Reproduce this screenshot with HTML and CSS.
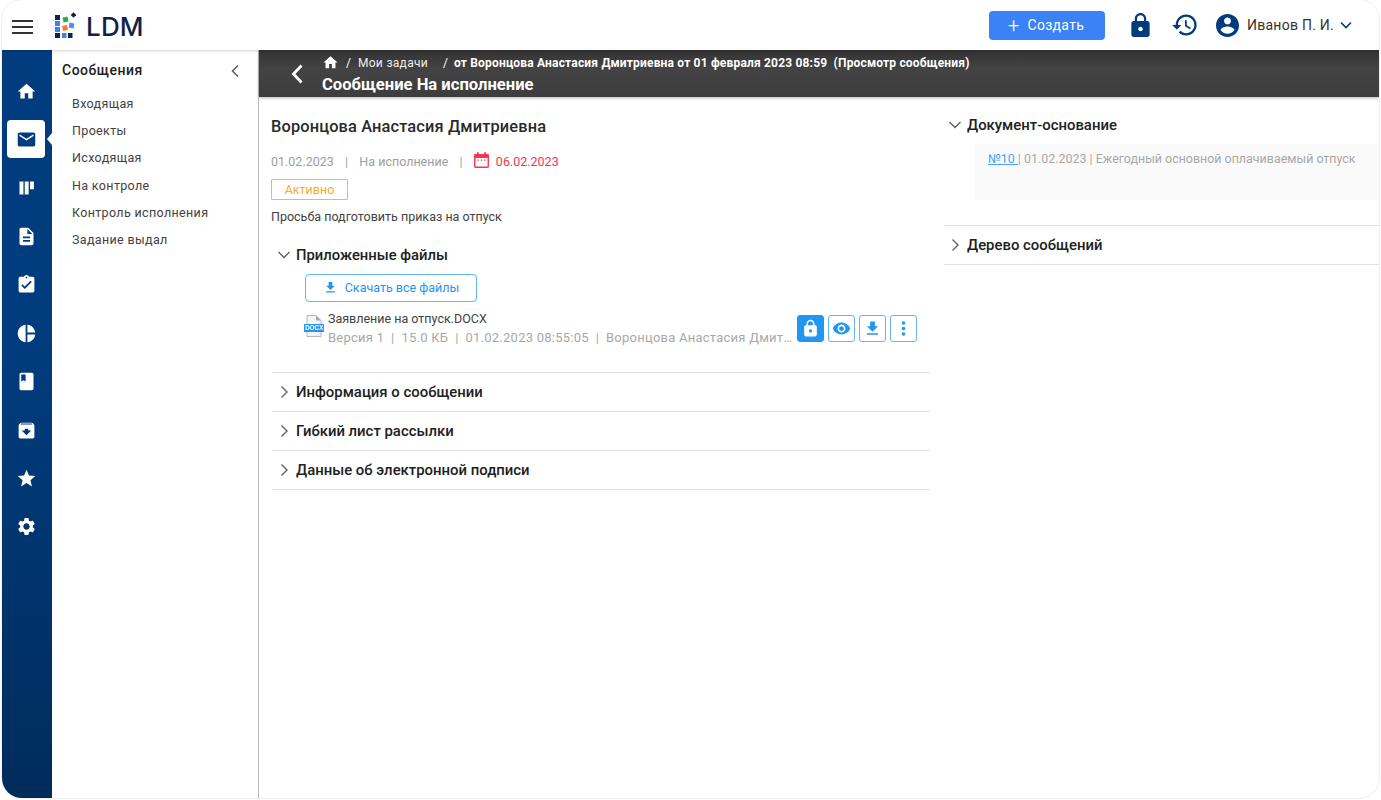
FILE: index.html
```html
<!DOCTYPE html>
<html lang="ru">
<head>
<meta charset="utf-8">
<title>LDM</title>
<link rel="stylesheet" href="styles.css">
</head>
<body>
<div class="frame">
  <header class="topbar">
    <button class="burger" aria-label="Меню"><span></span><span></span><span></span></button>
    <div class="logo">
      <svg class="logo-mark" viewBox="0 0 21 26" width="21" height="26">
        <rect x="0" y="3" width="5" height="5" fill="#0f2347"/>
        <rect x="0" y="9" width="5" height="5" fill="#3b82f6"/>
        <rect x="0" y="15" width="5" height="5" fill="#3b82f6"/>
        <rect x="0" y="21" width="5" height="5" fill="#0f2347"/>
        <rect x="7" y="21" width="4.500" height="5" fill="#3b82f6"/>
        <rect x="13" y="21" width="4.500" height="5" fill="#0f2347"/>
        <rect x="8" y="5" width="5" height="5" fill="#27a844" transform="rotate(-15 10.500 7.500)"/>
        <rect x="7.500" y="13.500" width="5" height="5" fill="#f07b2f" transform="rotate(-10 10 16)"/>
        <rect x="14" y="11" width="5" height="5" fill="#4f8ff5" transform="rotate(10 16.500 13.500)"/>
        <rect x="16.500" y="1" width="4" height="4" fill="#0f2347" transform="rotate(45 18.500 3)"/>
      </svg>
      <span class="logo-text">LDM</span>
    </div>
    <div class="topbar-right">
      <button class="create"><span class="create-plus">+</span>Создать</button>
      <svg class="ic-lock" viewBox="4 1 16 21"><path d="M18 8h-1V6c0-2.760-2.240-5-5-5S7 3.240 7 6v2H6c-1.100 0-2 .9-2 2v10c0 1.100.9 2 2 2h12c1.100 0 2-.9 2-2V10c0-1.100-.9-2-2-2zm-6 9c-1.100 0-2-.9-2-2s.9-2 2-2 2 .9 2 2-.9 2-2 2zm3.100-9H8.900V6c0-1.710 1.390-3.100 3.100-3.100 1.710 0 3.100 1.390 3.100 3.100v2z"/></svg>
      <svg class="ic-history" viewBox="0 0 24 24"><path d="M13 3c-4.970 0-9 4.030-9 9H1l3.890 3.890.07.14L9 12H6c0-3.870 3.130-7 7-7s7 3.130 7 7-3.130 7-7 7c-1.930 0-3.680-.79-4.940-2.060l-1.420 1.420C8.270 19.990 10.510 21 13 21c4.970 0 9-4.030 9-9s-4.030-9-9-9zm-1 5v5l4.280 2.540.72-1.210-3.500-2.080V8H12z"/></svg>
      <div class="user">
        <svg class="ic-user" viewBox="2 2 20 20"><path d="M12 2C6.480 2 2 6.480 2 12s4.480 10 10 10 10-4.480 10-10S17.520 2 12 2zm0 3c1.660 0 3 1.340 3 3s-1.340 3-3 3-3-1.340-3-3 1.340-3 3-3zm0 14.200c-2.500 0-4.710-1.280-6-3.220.03-1.990 4-3.080 6-3.080 1.990 0 5.970 1.090 6 3.080-1.290 1.940-3.500 3.220-6 3.220z"/></svg>
        <span class="user-name">Иванов П. И.</span>
        <svg class="ic-caret" viewBox="0 0 12 8"><path d="M1 1.500l5 5 5-5" fill="none" stroke="#003c7e" stroke-width="1.600"/></svg>
      </div>
    </div>
  </header>

  <div class="body-row">
    <nav class="rail">
      <a class="rail-item"><svg class="home" viewBox="0 0 24 24"><path d="M10 20v-6h4v6h5v-8h3L12 3 2 12h3v8z"/></svg></a>
      <a class="rail-item active"><svg viewBox="0 0 24 24"><path d="M20 4H4c-1.100 0-2 .9-2 2v12c0 1.100.9 2 2 2h16c1.100 0 2-.9 2-2V6c0-1.100-.9-2-2-2zm0 4l-8 5-8-5V6l8 5 8-5v2z"/></svg></a>
      <a class="rail-item"><svg viewBox="0 0 24 24"><path d="M4 5h4.500v15H4zM10 5h4.500v15H10zM16 5h4.500v9H16z"/></svg></a>
      <a class="rail-item"><svg viewBox="0 0 24 24"><path d="M14 2H6c-1.100 0-2 .9-2 2v16c0 1.100.9 2 2 2h12c1.100 0 2-.9 2-2V8l-6-6zm2 16H8v-2h8v2zm0-4H8v-2h8v2zm-3-5V3.500L18.500 9H13z"/></svg></a>
      <a class="rail-item"><svg viewBox="0 0 24 24"><path d="M19 3h-4.180C14.400 1.840 13.300 1 12 1c-1.300 0-2.400.84-2.820 2H5c-1.100 0-2 .9-2 2v14c0 1.100.9 2 2 2h14c1.100 0 2-.9 2-2V5c0-1.100-.9-2-2-2zm-9 14l-4-4 1.410-1.410L10 14.170l6.590-6.590L18 9l-8 8zm2-14c.55 0 1 .45 1 1s-.45 1-1 1-1-.45-1-1 .45-1 1-1z"/></svg></a>
      <a class="rail-item"><svg viewBox="0 0 24 24"><path d="M11 2v20c-5.070-.5-9-4.790-9-10s3.930-9.500 9-10zm2.030 0v8.990H22c-.47-4.740-4.240-8.520-8.970-8.990zm0 11.010V22c4.740-.47 8.500-4.250 8.970-8.990h-8.970z"/></svg></a>
      <a class="rail-item"><svg viewBox="0 0 24 24"><path d="M18 2H6c-1.100 0-2 .9-2 2v16c0 1.100.9 2 2 2h12c1.100 0 2-.9 2-2V4c0-1.100-.9-2-2-2zM6 4h5v8l-2.500-1.500L6 12V4z"/></svg></a>
      <a class="rail-item"><svg viewBox="0 0 24 24"><path d="M20.540 5.230l-1.390-1.680C18.880 3.210 18.470 3 18 3H6c-.47 0-.88.21-1.160.55L3.460 5.230C3.170 5.570 3 6.020 3 6.500V19c0 1.100.9 2 2 2h14c1.100 0 2-.9 2-2V6.500c0-.48-.17-.93-.46-1.270zM12 17.500L6.500 12H10v-2h4v2h3.500L12 17.500zM5.120 5l.81-1h12l.94 1H5.120z"/></svg></a>
      <a class="rail-item"><svg viewBox="0 0 24 24"><path d="M12 17.270L18.180 21l-1.640-7.030L22 9.240l-7.190-.61L12 2 9.190 8.630 2 9.240l5.460 4.730L5.820 21z"/></svg></a>
      <a class="rail-item"><svg viewBox="0 0 24 24"><path d="M19.140 12.940c.04-.3.06-.61.06-.94 0-.32-.02-.64-.07-.94l2.030-1.580c.18-.14.23-.41.12-.61l-1.920-3.320c-.12-.22-.37-.29-.59-.22l-2.390.96c-.5-.38-1.030-.7-1.620-.94l-.36-2.540c-.04-.24-.24-.41-.48-.41h-3.840c-.24 0-.43.17-.47.41l-.36 2.540c-.59.24-1.130.57-1.620.94l-2.390-.96c-.22-.08-.47 0-.59.22L2.740 8.870c-.12.21-.08.47.12.61l2.030 1.580c-.05.3-.09.63-.09.94s.02.64.07.94l-2.030 1.580c-.18.14-.23.41-.12.61l1.920 3.320c.12.22.37.29.59.22l2.390-.96c.5.38 1.030.7 1.620.94l.36 2.540c.05.24.24.41.48.41h3.840c.24 0 .44-.17.47-.41l.36-2.540c.59-.24 1.130-.56 1.620-.94l2.390.96c.22.08.47 0 .59-.22l1.920-3.320c.12-.22.07-.47-.12-.61l-2.010-1.580zM12 15.600c-1.980 0-3.600-1.620-3.600-3.600s1.620-3.600 3.600-3.600 3.600 1.620 3.600 3.600-1.620 3.600-3.600 3.600z"/></svg></a>
    </nav>

    <aside class="submenu">
      <div class="submenu-head">
        <span class="submenu-title">Сообщения</span>
        <svg class="submenu-back" viewBox="0 0 10 14"><path d="M8 1.500L2.500 7 8 12.500" fill="none" stroke="#616161" stroke-width="1.600"/></svg>
      </div>
      <ul class="submenu-list">
        <li>Входящая</li>
        <li>Проекты</li>
        <li>Исходящая</li>
        <li>На контроле</li>
        <li>Контроль исполнения</li>
        <li>Задание выдал</li>
      </ul>
    </aside>

    <main class="main">
      <div class="pagebar">
        <svg class="pagebar-back" viewBox="0 0 12 20"><path d="M10.500 1.500L2.500 10l8 8.500" fill="none" stroke="#fff" stroke-width="2.800"/></svg>
        <div class="pagebar-text">
          <div class="crumbs">
            <svg class="crumb-home" viewBox="0 0 24 24"><path d="M10 20v-6h4v6h5v-8h3L12 3 2 12h3v8z"/></svg>
            <span class="crumb-sep">/</span>
            <span class="crumb">Мои задачи</span>
            <span class="crumb-sep second">/</span>
            <span class="crumb-strong">от Воронцова Анастасия Дмитриевна от 01 февраля 2023 08:59&nbsp; (Просмотр сообщения)</span>
          </div>
          <div class="pagebar-title">Сообщение На исполнение</div>
        </div>
      </div>

      <div class="columns">
        <section class="col-left">
          <h1 class="person">Воронцова Анастасия Дмитриевна</h1>
          <div class="meta">
            <span>01.02.2023</span><span class="meta-sep">|</span>
            <span>На исполнение</span><span class="meta-sep">|</span>
            <svg class="ic-cal" viewBox="0 0 15 16"><rect x=".7" y="2.700" width="13.600" height="12.600" rx="1" fill="none" stroke="#f5364c" stroke-width="1.400"/><path d="M0 2.500h15v3.500H0z" fill="#f5364c"/><path d="M3 .3h1.800v2.500H3zM10.200 .3H12v2.500h-1.800z" fill="#f5364c"/><path d="M3.500 7.500h1.300v1.300H3.500zM6.850 7.500h1.300v1.300H6.850zM10.200 7.500h1.300v1.300h-1.300z" fill="#f5364c"/></svg>
            <span class="due">06.02.2023</span>
          </div>
          <span class="status">Активно</span>
          <p class="note">Просьба подготовить приказ на отпуск</p>

          <div class="acc-head open-files">
            <svg class="chev" viewBox="0 0 14 14"><path d="M1.500 4l5.500 5.500L12.500 4" fill="none" stroke="#616161" stroke-width="1.400"/></svg>
            <span>Приложенные файлы</span>
          </div>
          <div class="files">
            <button class="dl-all">
              <svg viewBox="0 0 24 24"><path d="M19 9h-4V3H9v6H5l7 7 7-7zM5 18v2h14v-2H5z"/></svg>
              Скачать все файлы
            </button>
            <div class="file">
              <svg class="file-ic" viewBox="0 0 20 22">
                <path d="M3 .5h9l5 5v16H3z" fill="#f2f4f5" stroke="#a6a6a6" stroke-width=".8"/>
                <path d="M12 .5v5h5z" fill="#a6a6a6"/>
                <rect x="0" y="9" width="20" height="8" fill="#2196f3"/>
                <text x="10" y="15.400" class="file-ic-text">DOCX</text>
              </svg>
              <div class="file-info">
                <div class="file-name">Заявление на отпуск.DOCX</div>
                <div class="file-sub">Версия 1&nbsp; |&nbsp; 15.0 КБ&nbsp; |&nbsp; 01.02.2023 08:55:05&nbsp; |&nbsp; Воронцова Анастасия Дмитриевна</div>
              </div>
              <div class="file-actions">
                <button class="act solid"><svg viewBox="0 0 24 24"><path d="M18 8h-1V6c0-2.760-2.240-5-5-5S7 3.240 7 6v2H6c-1.100 0-2 .9-2 2v10c0 1.100.9 2 2 2h12c1.100 0 2-.9 2-2V10c0-1.100-.9-2-2-2zm-6 9c-1.100 0-2-.9-2-2s.9-2 2-2 2 .9 2 2-.9 2-2 2zm3.100-9H8.900V6c0-1.710 1.390-3.100 3.100-3.100 1.710 0 3.100 1.390 3.100 3.100v2z"/></svg></button>
                <button class="act"><svg viewBox="0 0 24 24"><path d="M12 4.500C7 4.500 2.730 7.610 1 12c1.730 4.390 6 7.500 11 7.500s9.270-3.110 11-7.500c-1.730-4.390-6-7.500-11-7.500zM12 17c-2.760 0-5-2.240-5-5s2.240-5 5-5 5 2.240 5 5-2.240 5-5 5zm0-8c-1.660 0-3 1.340-3 3s1.340 3 3 3 3-1.340 3-3-1.340-3-3-3z"/></svg></button>
                <button class="act"><svg viewBox="0 0 24 24"><path d="M19 9h-4V3H9v6H5l7 7 7-7zM5 18v2h14v-2H5z"/></svg></button>
                <button class="act"><svg viewBox="0 0 24 24"><circle cx="12" cy="5" r="2.300"/><circle cx="12" cy="12" r="2.300"/><circle cx="12" cy="19" r="2.300"/></svg></button>
              </div>
            </div>
          </div>

          <div class="acc-list">
            <div class="acc-row"><svg class="chev" viewBox="0 0 14 14"><path d="M4.500 1.500L10 7l-5.500 5.500" fill="none" stroke="#616161" stroke-width="1.400"/></svg><span>Информация о сообщении</span></div>
            <div class="acc-row"><svg class="chev" viewBox="0 0 14 14"><path d="M4.500 1.500L10 7l-5.500 5.500" fill="none" stroke="#616161" stroke-width="1.400"/></svg><span>Гибкий лист рассылки</span></div>
            <div class="acc-row"><svg class="chev" viewBox="0 0 14 14"><path d="M4.500 1.500L10 7l-5.500 5.500" fill="none" stroke="#616161" stroke-width="1.400"/></svg><span>Данные об электронной подписи</span></div>
          </div>
        </section>

        <section class="col-right">
          <div class="r-block first">
            <div class="acc-head r-head">
              <svg class="chev" viewBox="0 0 14 14"><path d="M1.500 4l5.500 5.500L12.500 4" fill="none" stroke="#616161" stroke-width="1.400"/></svg>
              <span>Документ-основание</span>
            </div>
            <div class="basis"><a class="basis-link">№10 </a>| 01.02.2023 | Ежегодный основной оплачиваемый отпуск</div>
          </div>
          <div class="r-block second">
            <div class="acc-head r-head">
              <svg class="chev" viewBox="0 0 14 14"><path d="M4.500 1.500L10 7l-5.500 5.500" fill="none" stroke="#616161" stroke-width="1.400"/></svg>
              <span>Дерево сообщений</span>
            </div>
          </div>
        </section>
      </div>
    </main>
  </div>
</div>
</body>
</html>
```

FILE: styles.css
```css
* { box-sizing: border-box; }
html, body { margin: 0; padding: 0; height: 100%; background: #fff; overflow: hidden; }
body { font-family: Roboto, "Liberation Sans", sans-serif; color: #212121; }
button { font-family: inherit; cursor: pointer; }
svg { display: block; flex: none; }

.frame {
  width: 1377px; height: 798px; margin-left: 2px;
  border-radius: 20px; overflow: hidden; background: #fff;
  display: flex; flex-direction: column;
  box-shadow: 0 0 0 1px #efefef;
}

.topbar {
  height: 50px; flex: none; display: flex; align-items: center;
  padding: 0 0 0 10px; background: #fff; position: relative; z-index: 2;
  box-shadow: 0 1px 3px rgba(0,0,0,.18);
}
.burger { width: 21px; height: 14px; margin-top: 3px; padding: 0; border: 0; background: none; display: flex; flex-direction: column; justify-content: space-between; }
.burger span { display: block; height: 2px; background: #333; }
.logo { display: flex; align-items: center; margin-left: 22px; }
.logo-text { font-family: Inter, sans-serif; font-weight: 500; font-size: 26px; letter-spacing: .2px; color: #0f2347; margin-left: 10px; margin-top: 2px; }

.topbar-right { margin-left: auto; display: flex; align-items: center; }
.create {
  width: 116px; height: 29px; margin-right: 26px; padding: 0 2px 0 0;
  display: flex; align-items: center; justify-content: center;
  background: #3b82f6; border: 0; border-radius: 4px; color: #fff; font-size: 14px; letter-spacing: .3px;
}
.create-plus { font-size: 20px; font-weight: 300; line-height: 1; margin-right: 8px; }
.ic-lock { width: 19px; height: 24px; fill: #003c7e; margin-right: 21px; }
.ic-history { width: 28px; height: 28px; fill: #003c7e; margin-right: 17px; }
.user { display: flex; align-items: center; padding-right: 27px; }
.ic-user { width: 23px; height: 23px; fill: #003c7e; }
.user-name { font-size: 14px; color: #333; margin-left: 8px; letter-spacing: .25px; }
.ic-caret { width: 12px; height: 8px; margin-left: 6px; }

.body-row { flex: 1; display: flex; min-height: 0; }

.rail {
  width: 50px; flex: none; padding: 22px 2px 0 0;
  display: flex; flex-direction: column; gap: 10.450px; align-items: center;
  background: linear-gradient(#003c7e, #003c7e 40%, #002c5c);
}
.rail-item { width: 38px; height: 38px; flex: none; display: flex; align-items: center; justify-content: center; border-radius: 4px; position: relative; }
.rail-item svg { width: 21px; height: 21px; fill: #fff; }
.rail-item.active { background: #fff; }
.rail-item.active svg { fill: #003c7e; }
.rail-item.active::after {
  content: ""; position: absolute; right: -7px; top: 13px;
  border-top: 6px solid transparent; border-bottom: 6px solid transparent; border-right: 5px solid #fff;
}

.submenu { width: 207px; flex: none; border-right: 1px solid #bdbdbd; padding: 10px 0 0 10px; }
.submenu-head { display: flex; align-items: center; justify-content: space-between; height: 19px; padding-right: 18px; }
.submenu-title { font-size: 14px; font-weight: 500; color: #212121; letter-spacing: .5px; }
.submenu-back { width: 10px; height: 14px; margin-top: 2px; }
.submenu-list { list-style: none; margin: 17px 0 0; padding: 0 0 0 10px; }
.submenu-list li { height: 27.200px; line-height: 16px; font-size: 12.500px; letter-spacing: .35px; color: #424242; }

.main { flex: 1; min-width: 0; display: flex; flex-direction: column; }
.pagebar {
  height: 47px; flex: none; display: flex; align-items: flex-start;
  background: linear-gradient(#333, #434343 40%, #3d3d3d); color: #fff;
  box-shadow: 0 1px 3px rgba(0,0,0,.3); position: relative;
}
.pagebar-back { width: 12px; height: 20px; margin: 14px 0 0 32px; }
.pagebar-text { margin-left: 19px; padding-top: 4px; }
.crumbs { display: flex; align-items: center; height: 17px; font-size: 12px; white-space: nowrap; }
.crumb-home { width: 17px; height: 17px; fill: #fff; }
.crumb-sep { margin: 0 7px; }
.crumb-sep.second { margin: 0 6px 0 15px; }
.crumb { color: #eee; letter-spacing: .3px; }
.crumb-strong { font-weight: 700; letter-spacing: .18px; }
.pagebar-title { font-size: 16.600px; font-weight: 700; line-height: 20px; margin-top: 4px; }

.columns { flex: 1; display: flex; min-height: 0; }
.col-left { width: 685px; flex: none; padding: 20px 0 0 12px; }
.col-right { flex: 1; min-width: 0; padding-top: 19px; }

.person { margin: 0; font-size: 16.400px; font-weight: 500; line-height: 20px; color: #2a2a2a; letter-spacing: .13px; }
.meta { display: flex; align-items: center; height: 20px; margin-top: 14px; font-size: 12.500px; color: #9e9e9e; }
.meta-sep { margin: 0 11.250px; }
.ic-cal { width: 15px; height: 16px; margin-right: 7px; margin-top: -2px; }
.due { color: #f5364c; }
.status {
  display: block; margin-top: 8px; width: 77px; height: 21px; line-height: 19px; text-align: center;
  border: 1px solid #ffb347; border-radius: 1px; color: #ffa726; font-size: 12.500px;
}
.note { margin: 9px 0 0; font-size: 12.500px; line-height: 16px; color: #424242; }

.acc-head { display: flex; align-items: center; font-size: 14.800px; font-weight: 500; color: #212121; }
.acc-head .chev, .acc-row .chev { width: 14px; height: 14px; }
.acc-head span { margin-left: 5px; }
.acc-row span { margin-left: 5px; }
.open-files { margin: 20px 0 0 6px; height: 20px; }

.files { padding: 9px 12px 0 34px; }
.dl-all {
  width: 172px; height: 28px; display: flex; align-items: center; justify-content: center; gap: 7px;
  background: #fff; border: 1px solid #64b5f6; border-radius: 4px; color: #2196f3; font-size: 12.500px; padding: 0 0 2px;
}
.dl-all svg { width: 15px; height: 15px; fill: #2196f3; }
.file { display: flex; align-items: flex-start; margin-top: 8px; height: 62px; }
.file-ic { width: 20px; height: 22px; margin-top: 5px; margin-left: -1px; }
.file-ic-text { font-family: "Liberation Sans", sans-serif; font-size: 6.300px; font-weight: 700; fill: #fff; text-anchor: middle; }
.file-info { width: 465px; margin-left: 4px; min-width: 0; }
.file-name { font-size: 12.500px; line-height: 17px; color: #424242; }
.file-sub { font-size: 13px; line-height: 18px; margin-top: 2px; color: #a8a8a8; white-space: nowrap; overflow: hidden; text-overflow: ellipsis; letter-spacing: .24px; }
.file-actions { display: flex; gap: 4px; margin-left: 4px; margin-top: 5px; }
.act { width: 27px; height: 27px; padding: 0; display: flex; align-items: center; justify-content: center; background: #fff; border: 1px solid #64b5f6; border-radius: 3px; }
.act svg { width: 19px; height: 19px; fill: #2196f3; }
.act.solid { background: #2196f3; border-color: #2196f3; }
.act.solid svg { fill: #fff; }

.acc-list { border-top: 1px solid #e0e0e0; margin: 0 14px 0 1px; }
.acc-row {
  height: 39px; display: flex; align-items: center; padding-left: 5px;
  font-size: 14.900px; font-weight: 500; color: #212121;
  border-bottom: 1px solid #e0e0e0;
}

.r-block { border-bottom: 1px solid #e0e0e0; padding-left: 4px; }
.r-block.first { height: 110px; }
.r-block.second { height: 39px; display: flex; align-items: center; }
.r-head { height: 18px; }
.r-head span { font-size: 14.900px; }
.basis {
  margin: 10px 0 0 27px; height: 56px; padding: 7px 0 0 13px;
  background: #fafafa; font-size: 12.450px; line-height: 15px; color: #a8a8a8;
}
.basis-link { color: #42a5f5; text-decoration: underline; }
```
